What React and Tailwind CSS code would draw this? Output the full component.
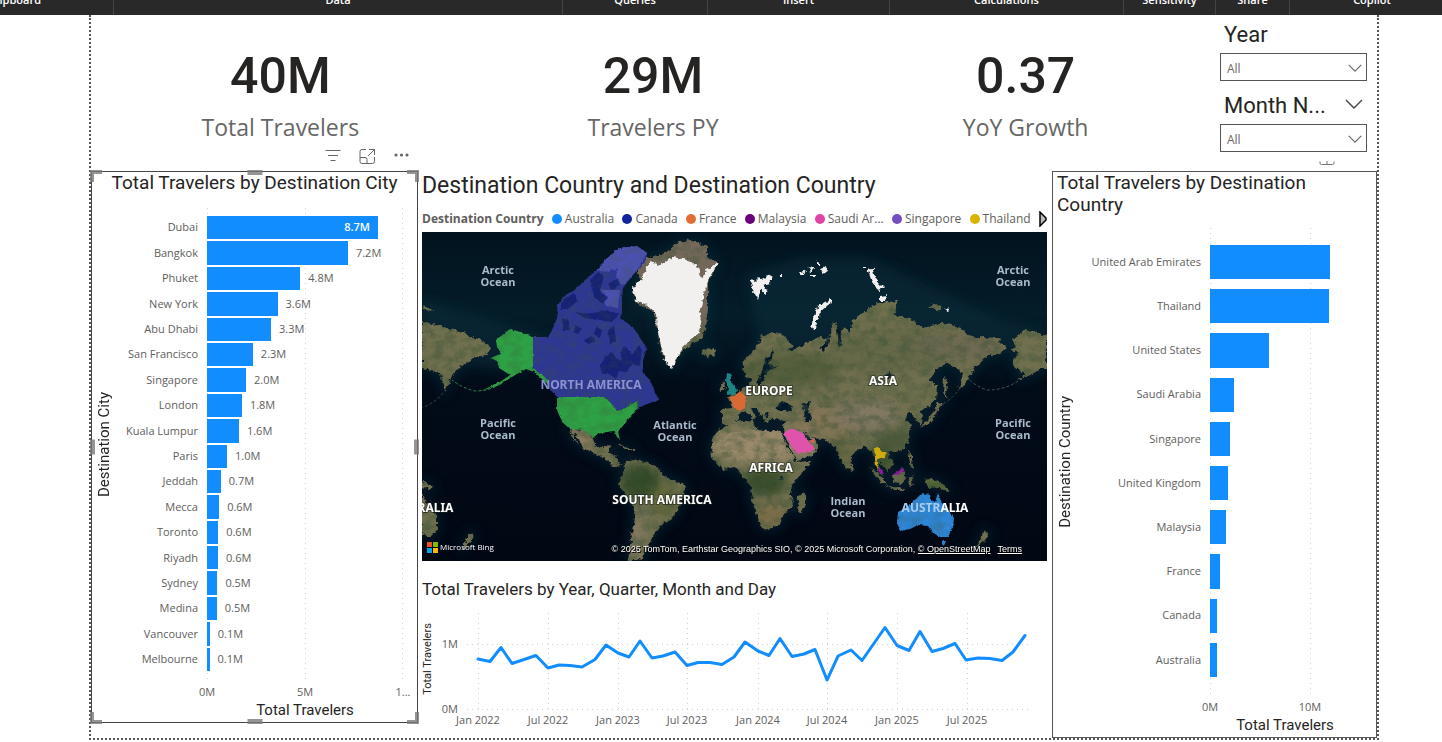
import React from "react";

const ribbonGroups = ["Data", "Queries", "Insert", "Calculations", "Sensitivity", "Share"];

const kpis = [
  { value: "40M", label: "Total Travelers" },
  { value: "29M", label: "Travelers PY" },
  { value: "0.37", label: "YoY Growth" },
];

const cities = [
  ["Dubai", 8.7, 8.72],
  ["Bangkok", 7.2, 7.19],
  ["Phuket", 4.8, 4.76],
  ["New York", 3.6, 3.6],
  ["Abu Dhabi", 3.3, 3.27],
  ["San Francisco", 2.3, 2.34],
  ["Singapore", 2.0, 1.99],
  ["London", 1.8, 1.78],
  ["Kuala Lumpur", 1.6, 1.63],
  ["Paris", 1.0, 1.02],
  ["Jeddah", 0.7, 0.7],
  ["Mecca", 0.6, 0.62],
  ["Toronto", 0.6, 0.57],
  ["Riyadh", 0.6, 0.56],
  ["Sydney", 0.5, 0.53],
  ["Medina", 0.5, 0.5],
  ["Vancouver", 0.1, 0.14],
  ["Melbourne", 0.1, 0.13],
];

const countries = [
  ["United Arab Emirates", 11.96],
  ["Thailand", 11.94],
  ["United States", 5.9],
  ["Saudi Arabia", 2.35],
  ["Singapore", 2.0],
  ["United Kingdom", 1.77],
  ["Malaysia", 1.62],
  ["France", 1.02],
  ["Canada", 0.72],
  ["Australia", 0.65],
];

const legend = [
  ["Australia", "bg-[#118dff]"],
  ["Canada", "bg-[#12239e]"],
  ["France", "bg-[#e66c37]"],
  ["Malaysia", "bg-[#6b007b]"],
  ["Saudi Ar...", "bg-[#e044a7]"],
  ["Singapore", "bg-[#744ec2]"],
  ["Thailand", "bg-[#d9b300]"],
];

const linePoints =
  "478,659 490,661.5 501,647.5 512,663.5 524,659.5 536,655.5 548,668 559,665 570,665.5 582,667 595,659.5 606,645 618,653 629,657 640,641 652,658 663,656 675,652 687,665.5 698,662.5 710,662.5 722,664.5 734,657 745,642 758,651 769,655.5 780,638.5 792,656.5 804,654 815,649.5 827,680 838,656 851,650 862,660.5 885,627.5 897,645.5 909,650.5 920,631.5 932,651.5 943,648.5 955,643.5 966,660 978,658 990,658.5 1002,660.5 1013,652 1025,635.5";

const timeTicks = [
  [478, "Jan 2022"],
  [548, "Jul 2022"],
  [618, "Jan 2023"],
  [687, "Jul 2023"],
  [758, "Jan 2024"],
  [827, "Jul 2024"],
  [897, "Jan 2025"],
  [967, "Jul 2025"],
];

const DOTTED =
  "bg-[repeating-linear-gradient(to_bottom,#d0d0d0_0px,#d0d0d0_1px,transparent_1px,transparent_5px)]";

function Ribbon() {
  return (
    <header className="relative z-10 grid h-[15px] grid-cols-[114fr_449fr_145fr_182fr_234fr_92fr_74fr_152fr] grid-rows-[15px] overflow-hidden bg-[#292929] font-['Open_Sans',sans-serif] text-[11px] leading-4 font-semibold text-white">
      <div className="flex items-end border-r border-[#444] pb-[7px]">
        <span className="flex w-[41px] justify-end">Clipboard</span>
      </div>
      {ribbonGroups.map((g) => (
        <div key={g} className="flex items-end justify-center border-r border-[#444] pb-[7px]">
          {g}
        </div>
      ))}
      <div className="flex items-end justify-center pb-[7px] pl-3">Copilot</div>
    </header>
  );
}

function Chevron({ className }) {
  return (
    <svg viewBox="0 0 18 10" className={className} fill="none" stroke="currentColor" aria-hidden="true">
      <path d="M1 1 L9 9 L17 1" strokeWidth="1.4" />
    </svg>
  );
}

function Slicer({ id, label, expandable }) {
  return (
    <div>
      <div className="flex h-9 items-center justify-between px-1">
        <label htmlFor={id} className="font-[Roboto,sans-serif] text-[22px] leading-7 text-[#252423]">
          {label}
        </label>
        {expandable && (
          <button type="button" aria-label="Expand" className="pb-1 text-[#444]">
            <Chevron className="h-[10px] w-[18px]" />
          </button>
        )}
      </div>
      <div className="relative">
        <select
          id={id}
          className="block h-7 w-full appearance-none rounded-none border border-[#555] bg-white px-[6px] pt-1 font-['Open_Sans',sans-serif] text-xs text-[#666]"
        >
          <option>All</option>
        </select>
        <Chevron className="pointer-events-none absolute top-[11px] right-[5px] h-2 w-[14px] text-[#666]" />
      </div>
    </div>
  );
}

function SelectionHandles() {
  const bar = "absolute bg-[#7a7a7a]/80";
  return (
    <div className="pointer-events-none absolute -inset-0.5" aria-hidden="true">
      <i className="absolute top-0 left-0 h-3 w-3 border-t-4 border-l-4 border-[#7a7a7a]/80" />
      <i className="absolute top-0 right-0 h-3 w-3 border-t-4 border-r-4 border-[#7a7a7a]/80" />
      <i className="absolute bottom-0 left-0 h-3 w-3 border-b-4 border-l-4 border-[#7a7a7a]/80" />
      <i className="absolute right-0 bottom-0 h-3 w-3 border-r-4 border-b-4 border-[#7a7a7a]/80" />
      <i className={`${bar} top-0 left-1/2 h-[5px] w-[15px] -translate-x-1/2`} />
      <i className={`${bar} bottom-0 left-1/2 h-[5px] w-[15px] -translate-x-1/2`} />
      <i className={`${bar} top-1/2 left-0 h-[15px] w-[5px] -translate-y-1/2`} />
      <i className={`${bar} top-1/2 right-0 h-[15px] w-[5px] -translate-y-1/2`} />
    </div>
  );
}

function VisualToolbar() {
  return (
    <div className="absolute -top-6 right-2 flex items-center gap-[18px] text-[#666]">
      <button type="button" aria-label="Filters">
        <svg viewBox="0 0 16 16" className="h-4 w-4" fill="none" stroke="currentColor">
          <path d="M0.5 2.5h15M3 7.5h10M5.5 12.5h5" />
        </svg>
      </button>
      <button type="button" aria-label="Focus mode">
        <svg viewBox="0 0 16 16" className="h-4 w-4" fill="none" stroke="currentColor">
          <path d="M7 1.500H3a2 2 0 0 0-2 2v10a2 2 0 0 0 2 2h10.500a2 2 0 0 0 2-2V9M1 9.500h5a2 2 0 0 1 2 2v4M9 8l6.500-6.500M10 1.500h5.500v5.500" />
        </svg>
      </button>
      <button type="button" aria-label="More options">
        <svg viewBox="0 0 16 16" className="h-4 w-4" fill="currentColor">
          <circle cx="3" cy="7" r="1.600" />
          <circle cx="8.500" cy="7" r="1.600" />
          <circle cx="14" cy="7" r="1.600" />
        </svg>
      </button>
    </div>
  );
}

function CityChart() {
  return (
    <section className="relative h-[552px] border border-[#444] bg-white">
      <VisualToolbar />
      <SelectionHandles />
      <h2 className="text-center font-[Roboto,sans-serif] text-[19px] leading-[22px] text-[#252423]">
        Total Travelers by Destination City
      </h2>
      <div className="mt-[14px] flex pr-[14px]">
        <div className="flex h-[474px] w-6 items-center justify-center">
          <span className="rotate-180 font-[Roboto,sans-serif] text-[15px] leading-4 whitespace-nowrap text-[#252423] [writing-mode:vertical-rl]">
            Destination City
          </span>
        </div>
        <div className="min-w-0 flex-1 font-['Open_Sans',sans-serif] text-[11px] text-[#605e5c]">
          <div className="relative flex h-[474px] flex-col pt-[7px] pb-[10px]">
            <div className="absolute inset-y-0 right-0 left-[91px]" aria-hidden="true">
              <i className={`absolute inset-y-0 left-0 w-px ${DOTTED}`} />
              <i className={`absolute inset-y-0 left-1/2 w-px ${DOTTED}`} />
              <i className={`absolute inset-y-0 right-0 w-px ${DOTTED}`} />
            </div>
            {cities.map(([name, value, size], i) => (
              <div key={name} className="relative flex flex-1 items-stretch">
                <span className="flex w-[91px] items-center justify-end pr-[9px] whitespace-nowrap">
                  {name}
                </span>
                <div className="flex flex-1 items-center py-px">
                  <div
                    className="flex h-full shrink-0 items-center justify-end bg-[#118dff]"
                    style={{ width: `${size * 10}%` }}
                  >
                    {i === 0 && <span className="pr-2 font-semibold text-white">{value.toFixed(1)}M</span>}
                  </div>
                  {i > 0 && <span className="pl-2">{value.toFixed(1)}M</span>}
                </div>
              </div>
            ))}
          </div>
          <div className="ml-[75px] -mr-4 flex justify-between pt-[2px] leading-4">
            <span className="w-8 text-center">0M</span>
            <span className="w-8 text-center">5M</span>
            <span className="w-8 text-center">1...</span>
          </div>
          <div className="ml-[91px] text-center font-[Roboto,sans-serif] text-[15px] leading-5 text-[#252423]">
            Total Travelers
          </div>
        </div>
      </div>
    </section>
  );
}

function CountryChart() {
  return (
    <section className="relative h-[567px] border border-[#555] bg-white">
      <svg viewBox="0 0 16 5" className="absolute -top-[11px] right-[41px] h-[5px] w-4" fill="none" stroke="#777" aria-hidden="true">
        <path d="M1 0.500 V2 a1.500 1.500 0 0 0 1.500 1.500 H13.500 A1.500 1.500 0 0 0 15 2 V0.500 M8 0V3" />
      </svg>
      <h2 className="pl-1 font-[Roboto,sans-serif] text-[19px] leading-[22px] text-[#252423]">
        Total Travelers by Destination
        <br />
        Country
      </h2>
      <div className="mt-3 flex pr-[46px]">
        <div className="flex h-[467px] w-6 items-center justify-center">
          <span className="rotate-180 font-[Roboto,sans-serif] text-[15px] leading-4 whitespace-nowrap text-[#252423] [writing-mode:vertical-rl]">
            Destination Country
          </span>
        </div>
        <div className="min-w-0 flex-1 font-['Open_Sans',sans-serif] text-[11px] text-[#605e5c]">
          <div className="relative flex h-[467px] flex-col pt-[12px] pb-[13px]">
            <div className="absolute inset-y-0 right-0 left-[133px]" aria-hidden="true">
              <i className={`absolute inset-y-0 left-0 w-px ${DOTTED}`} />
              <i className={`absolute inset-y-0 left-[83.3%] w-px ${DOTTED}`} />
            </div>
            {countries.map(([name, size]) => (
              <div key={name} className="relative flex flex-1 items-stretch">
                <span className="flex w-[133px] items-center justify-end pr-[9px] whitespace-nowrap">
                  {name}
                </span>
                <div className="flex-1 py-[5px]">
                  <div className="h-full bg-[#118dff]" style={{ width: `${(size / 12) * 100}%` }} />
                </div>
              </div>
            ))}
          </div>
          <div className="ml-[117px] flex gap-[68px] pt-1 leading-4">
            <span className="w-8 text-center">0M</span>
            <span className="w-8 text-center">10M</span>
          </div>
          <div className="-mr-[30px] ml-[133px] text-center font-[Roboto,sans-serif] text-[15px] leading-5 text-[#252423]">
            Total Travelers
          </div>
        </div>
      </div>
    </section>
  );
}

const LAND = [
  "M422,321 L440,326 L463,333 L483,341 L491,348 L486,355 L473,358 L463,365 L456,372 L450,380 L445,392 L443,384 L440,374 L432,370 L422,368Z",
  "M570,429 L585,430 L593,438 L595,445 L602,449 L607,445 L611,446 L608,452 L617,457 L617,462 L623,465 L613,466 L605,458 L593,453 L583,448 L580,440 L572,432Z",
  "M568,429 L571,431 L575,439 L579,445 L573,439Z",
  "M624,463 L633,459 L647,463 L658,468 L665,477 L680,483 L686,487 L682,497 L678,510 L670,520 L663,523 L653,537 L648,547 L642,557 L638,561 L628,561 L630,547 L633,527 L635,508 L628,498 L619,485 L622,475 L625,468Z",
  "M616,444 L628,447 L636,450 L630,450 L620,446Z",
  "M637,265 L650,257 L667,253 L677,243 L690,240 L707,247 L707,258 L718,262 L708,282 L708,305 L706,325 L702,338 L687,347 L677,358 L672,369 L663,358 L658,335 L655,312 L637,303 L632,290 L640,280Z",
  "M701,352 L706,348 L714,349 L715,355 L707,358Z",
  "M743,368 L744,360 L753,352 L763,335 L780,332 L793,345 L787,352 L797,348 L807,343 L820,337 L830,338 L833,322 L838,323 L838,335 L845,328 L850,333 L853,320 L863,312 L877,303 L897,301 L895,315 L910,318 L923,328 L943,323 L960,328 L973,337 L997,338 L1007,348 L997,355 L987,355 L977,365 L970,375 L963,387 L959,388 L963,374 L955,366 L944,363 L936,370 L930,380 L937,386 L936,400 L926,408 L920,412 L923,420 L921,426 L915,418 L908,412 L906,420 L911,424 L909,440 L903,450 L893,453 L887,450 L890,458 L893,465 L887,471 L882,464 L878,462 L881,470 L884,477 L879,472 L875,460 L872,452 L865,446 L857,450 L851,456 L850,468 L847,470 L841,460 L836,447 L825,440 L812,437 L819,446 L812,455 L797,461 L790,448 L784,435 L783,425 L785,420 L772,419 L768,424 L760,414 L755,408 L751,408 L756,418 L753,420 L746,410 L739,414 L736,425 L731,427 L722,423 L722,409 L733,408 L728,398 L741,391 L750,385 L752,378 L746,376Z",
  "M722,428 L735,422 L752,420 L755,428 L768,431 L780,430 L788,448 L796,462 L811,461 L800,475 L792,485 L790,495 L793,505 L783,515 L780,524 L768,530 L762,528 L757,515 L752,500 L751,485 L742,475 L735,467 L723,469 L712,458 L711,443 L716,433Z",
  "M720,383 L725,382 L726,388 L721,391Z",
  "M798,497 L806,493 L806,503 L801,514 L797,508Z",
  "M870,467 L875,470 L884,480 L887,486 L880,482Z",
  "M885,486 L895,487 L906,490 L895,490Z",
  "M892,475 L904,470 L905,477 L901,484 L894,483Z",
  "M908,478 L914,476 L911,480 L913,486 L909,485Z",
  "M908,450 L911,455 L913,464 L915,470 L911,468Z",
  "M923,480 L933,479 L944,485 L950,491 L940,489 L930,487Z",
  "M938,402 L943,405 L937,408 L936,416 L929,424 L920,428 L928,420 L934,411Z",
  "M944,376 L947,382 L946,398 L943,392Z",
  "M983,530 L990,534 L985,540 L977,547 L973,550 L981,541Z",
  "M470,532 L475,536 L468,543 L460,551 L466,541Z",
  "M422,493 L427,502 L437,517 L437,530 L430,537 L422,535Z",
  "M422,481 L434,487 L422,489Z",
  "M1047,336 L1035,332 L1025,329 L1012,340 L1016,346 L1011,350 L1018,354 L1012,361 L1016,368 L1026,374 L1017,381 L1032,374 L1041,368 L1047,368Z",
  "M930,306 L937,304 L943,308 L938,311Z",
  "M422,305 L430,309 L435,311 L424,310Z",
  "M850,465 L853,467 L852,471 L850,470Z",
];

const ICE = [
  "M632,290 L640,280 L645,272 L650,262 L660,265 L673,257 L687,260 L697,265 L702,278 L707,270 L718,262 L707,282 L703,298 L700,315 L702,325 L697,335 L687,343 L677,357 L672,369 L665,360 L661,345 L658,332 L657,315 L648,305 L637,302Z",
  "M750,280 L756,281 L760,277 L762,280 L768,274 L773,277 L770,283 L763,285 L768,292 L765,294 L761,289 L758,300 L753,290Z",
  "M867,268 L873,270 L875,278 L879,283 L884,288 L878,290 L872,282Z",
  "M880,296 L887,295 L885,301 L880,301Z",
  "M831,299 L832,302 L822,310 L816,322 L815,330 L811,329 L813,318 L819,306Z",
  "M799,272 l5,-1 l2,3 l-5,1Z M808,268 l5,-2 l2,3 l-5,3Z M817,262 l3,-1 l0,4 l-3,0Z M820,269 l6,-2 l2,3 l-6,3Z M812,274 l4,0 l0,2 l-4,0Z M780,275 l2,0 l0,2 l-2,0Z M848,270 l2,0 l0,1 l-2,0Z M863,266 l3,0 l0,2 l-3,0Z M944,308 l6,1 l-1,3Z",
];

const WATER = [
  "M756,384 L760,374 L766,358 L773,349 L774,353 L768,364 L778,366 L768,371 L764,380 L758,386Z",
  "M775,408 L781,401 L786,403 L793,407 L791,411 L780,411Z",
  "M802,403 L810,401 L808,410 L812,421 L805,421 L804,410Z",
  "M804,431 L812,440 L809,441 L805,437Z",
  "M765,412 L768,411 L769,418 L766,418Z",
  "M838,325 L842,337 L841,348 L838,346 L836,330Z",
  "M828,338 L830,342 L824,352 L821,350Z",
  "M780,476 L784,476 L783,480 L780,479Z",
  "M888,371 L892,375 L889,378 L884,381Z",
];

const CANADA =
  "M533,337 L548,337 L553,328 L557,318 L558,305 L563,297 L577,288 L587,278 L597,270 L607,258 L620,248 L637,246 L647,253 L645,262 L633,275 L623,288 L622,298 L622,312 L620,318 L633,327 L640,338 L647,348 L643,360 L643,373 L650,380 L655,392 L659,400 L650,403 L638,408 L637,401 L627,407 L617,411 L613,405 L605,397 L557,397 L548,387 L547,380 L533,368Z";

const CANADA_WATER =
  "M600,366 L605,357 L612,352 L615,358 L622,361 L620,350 L626,347 L632,355 L639,345 L642,350 L640,366 L632,364 L626,372 L619,371 L616,380 L610,374 L602,374Z M575,312 L590,314 L604,310 L620,314 L612,322 L600,320 L584,318Z M590,280 L598,272 L604,276 L600,290 L608,298 L602,304 L594,296Z M562,300 L574,293 L578,300 L570,308 L560,310Z M608,330 L614,326 L616,340 L610,344Z M575,325 L582,328 L578,334 L573,332Z M562,318 L568,320 L570,330 L563,330Z M584,340 L592,336 L596,341 L588,344Z M608,284 L618,278 L620,284 L612,290Z M596,326 L602,330 L600,338 L594,334Z";

const US =
  "M557,397 L605,397 L613,405 L617,411 L627,407 L637,401 L638,408 L634,412 L627,421 L622,427 L618,431 L620,440 L617,437 L614,431 L607,432 L597,434 L593,438 L585,430 L570,429 L562,422 L557,410Z M496,340 L510,329 L520,332 L533,337 L533,368 L546,378 L550,386 L543,380 L534,372 L526,369 L517,374 L497,386 L481,391 L500,382 L510,375 L499,368 L497,361 L490,358 L501,354 L497,347Z";

const AUSTRALIA =
  "M898,512 L907,507 L915,500 L922,493 L930,495 L931,500 L935,502 L938,493 L942,503 L950,512 L954,518 L953,527 L948,537 L940,537 L932,532 L928,526 L918,525 L910,529 L900,531 L897,523Z M942,541 L946,541 L944,546 L942,544Z";

const tone = [
  [760, 445, 48, 18, "#9c8a6c", 1],
  [765, 482, 22, 14, "#354c26", 0.95],
  [770, 515, 18, 12, "#7d6d48", 0.9],
  [800, 445, 18, 14, "#96836a", 0.9],
  [825, 422, 32, 16, "#857558", 0.9],
  [866, 415, 34, 14, "#837862", 0.95],
  [840, 452, 12, 16, "#64643f", 0.8],
  [895, 440, 20, 12, "#4a5736", 0.9],
  [880, 460, 16, 12, "#354c28", 0.9],
  [790, 370, 50, 16, "#525a38", 0.8],
  [890, 350, 60, 22, "#626747", 0.7],
  [960, 345, 45, 14, "#6e6a52", 0.7],
  [640, 482, 20, 18, "#304725", 0.95],
  [666, 500, 16, 16, "#606735", 0.7],
  [636, 535, 8, 30, "#857962", 0.9],
  [583, 438, 12, 10, "#8f7c60", 0.9],
  [936, 485, 14, 6, "#44612c", 1],
  [675, 280, 50, 60, "#76695c", 1],
];

const mapLabels = [
  [498, 274, ["Arctic", "Ocean"]],
  [1013, 274, ["Arctic", "Ocean"]],
  [498, 427, ["Pacific", "Ocean"]],
  [1013, 427, ["Pacific", "Ocean"]],
  [675, 429, ["Atlantic", "Ocean"]],
  [848, 505, ["Indian", "Ocean"]],
];

function WorldMap() {
  return (
    <svg viewBox="422 232 625 329" preserveAspectRatio="xMidYMid slice" className="block h-full w-full" role="img" aria-label="World map">
      <defs>
        <linearGradient id="sea" x1="0" y1="0" x2="0" y2="1">
          <stop offset="0" stopColor="#02131f" />
          <stop offset="0.250" stopColor="#041d29" />
          <stop offset="0.480" stopColor="#020b18" />
          <stop offset="1" stopColor="#010814" />
        </linearGradient>
        <filter id="coast" x="-5%" y="-5%" width="110%" height="110%">
          <feTurbulence type="fractalNoise" baseFrequency="0.22" numOctaves="3" seed="4" result="n" />
          <feDisplacementMap in="SourceGraphic" in2="n" scale="6" xChannelSelector="R" yChannelSelector="G" />
        </filter>
        <filter id="edge" x="-5%" y="-5%" width="110%" height="110%">
          <feTurbulence type="fractalNoise" baseFrequency="0.3" numOctaves="2" seed="9" result="n" />
          <feDisplacementMap in="SourceGraphic" in2="n" scale="3" xChannelSelector="R" yChannelSelector="G" />
        </filter>
        <filter id="relief" x="0" y="0" width="100%" height="100%">
          <feTurbulence type="fractalNoise" baseFrequency="0.09 0.13" numOctaves="5" seed="12" result="n" />
          <feColorMatrix in="n" type="matrix" values="0 0 0 0 0.05  0 0 0 0 0.09  0 0 0 0 0.04  2.6 0 0 0 -1" result="dark" />
          <feComposite in="dark" in2="SourceAlpha" operator="in" />
        </filter>
        <filter id="soft" x="-50%" y="-50%" width="200%" height="200%">
          <feGaussianBlur stdDeviation="5" />
        </filter>
        <filter id="shelf" x="-20%" y="-20%" width="140%" height="140%">
          <feGaussianBlur stdDeviation="6" />
        </filter>
        <clipPath id="landclip">
          {LAND.map((d) => (
            <path key={d} d={d} />
          ))}
        </clipPath>
      </defs>
      <rect x="422" y="232" width="625" height="329" fill="url(#sea)" />
      <g filter="url(#shelf)" opacity="0.5">
        {LAND.map((d) => (
          <path key={d} d={d} fill="#0b3340" stroke="#0b3340" strokeWidth="5" />
        ))}
        <path d="M745,275 L800,258 L870,258 L1000,320 L1047,330 L1047,350 L760,340Z" fill="#0a2f3c" />
        <path d="M422,300 L560,340 L520,372 L422,360Z" fill="#0a2f3c" />
      </g>
      <g filter="url(#coast)">
        <g clipPath="url(#landclip)">
          <rect x="422" y="232" width="625" height="329" fill="#706f50" />
          <g filter="url(#soft)">
            {tone.map(([cx, cy, rx, ry, fill, opacity]) => (
              <ellipse key={`${cx}-${cy}`} cx={cx} cy={cy} rx={rx} ry={ry} fill={fill} opacity={opacity} />
            ))}
          </g>
        </g>
        {WATER.map((d) => (
          <path key={d} d={d} fill="#04192a" />
        ))}
      </g>
      <g filter="url(#coast)" opacity="0.52">
        <g filter="url(#relief)">
          {LAND.map((d) => (
            <path key={d} d={d} />
          ))}
        </g>
      </g>
      <g filter="url(#coast)" fill="#f2f0ef">
        {ICE.map((d) => (
          <path key={d} d={d} />
        ))}
      </g>
      <path d="M443,393 Q436,402 422,408 M960,388 Q950,402 938,406" stroke="#4c5544" strokeWidth="0.8" fill="none" strokeDasharray="3 2" />
      <path d="M1018,381 Q1005,390 987,390 Q975,386 968,378" stroke="#58645a" strokeWidth="0.8" fill="none" strokeDasharray="3 2" />
      <path d="M500,384 Q490,391 475,391 Q462,388 452,380" stroke="#38a050" strokeWidth="0.8" fill="none" strokeDasharray="3 2" />
      <g filter="url(#edge)">
        <path d={CANADA} fill="#2f3892" />
        <path d="M597,270 L607,258 L620,248 L637,246 L647,253 L640,266 L625,284 L614,286 L618,268 L606,272Z M600,290 L620,290 L618,308 L606,306Z" fill="#5358b8" opacity="0.800" />
        <path d={CANADA_WATER} fill="#10206f" opacity="0.85" />
        <path d={US} fill="#2fa045" />
        <path d={AUSTRALIA} fill="#2f86d6" />
        <path d="M727,373 L732,374 L730,380 L737,390 L735,394 L727,395 L729,389 L726,381Z" fill="#1f8585" />
        <path d="M728,397 L735,396 L740,391 L746,396 L745,408 L740,411 L733,408 L732,402Z" fill="#d96a35" />
        <path d="M784,433 L791,428 L803,433 L808,441 L814,447 L813,450 L798,454 L791,445Z" fill="#e052ad" />
        <path d="M809,441 L815,439 L814,443Z" fill="#e0654f" />
        <path d="M874,448 L878,447 L882,452 L886,452 L885,457 L880,458 L877,460 L877,465 L880,469 L876,466 L875,458Z" fill="#cfab10" />
        <path d="M878,467 L882,470 L884,475 L880,474Z M892,475 L900,470 L903,467 L904,471 L898,475Z" fill="#8a1f95" />
      </g>
      <g opacity="0.22" filter="url(#relief)">
        <path d={CANADA} />
        <path d={US} />
        <path d={AUSTRALIA} />
      </g>
      <g textAnchor="middle" fontSize="12" fontWeight="700" fontFamily="'Noto Sans', sans-serif">
        <text x="591" y="389" fill="#8d91cf">NORTH AMERICA</text>
        <text x="935" y="512">
          <tspan fill="#a5cdf2">AUSTR</tspan>
          <tspan fill="#fff">ALIA</tspan>
        </text>
        <g fill="#fff" stroke="#1a1f1a" strokeOpacity="0.5" strokeWidth="2" paintOrder="stroke">
          <text x="662" y="504">SOUTH AMERICA</text>
          <text x="769" y="395">EUROPE</text>
          <text x="883" y="385">ASIA</text>
          <text x="771" y="472">AFRICA</text>
          <text x="420" y="512">AUSTRALIA</text>
        </g>
        {mapLabels.map(([x, y, [first, second]]) => (
          <g key={`${x}-${y}`} fill="#a9bccb" fontSize="11" fontFamily="'Open Sans', sans-serif">
            <text x={x} y={y}>{first}</text>
            <text x={x} y={y + 12}>{second}</text>
          </g>
        ))}
      </g>
    </svg>
  );
}

function MapVisual() {
  return (
    <section>
      <h2 className="pt-px font-[Roboto,sans-serif] text-[23px] leading-7 whitespace-nowrap text-[#252423]">
        Destination Country and Destination Country
      </h2>
      <div className="flex h-8 items-center justify-between pt-[6px] font-['Open_Sans',sans-serif] text-[12px] whitespace-nowrap text-[#605e5c]">
        <span className="font-bold">Destination Country</span>
        {legend.map(([name, color]) => (
          <span key={name} className="flex items-center gap-[3px]">
            <i className={`h-[10px] w-[10px] rounded-full ${color}`} />
            {name}
          </span>
        ))}
        <button type="button" aria-label="Next legend items">
          <svg viewBox="0 0 8 16" className="h-4 w-2" fill="#bbb" stroke="#000" strokeWidth="1.500">
            <path d="M1 1 L7 7 V9 L1 15Z" />
          </svg>
        </button>
      </div>
      <div className="relative h-[329px] overflow-hidden">
        <WorldMap />
        <div className="absolute bottom-2 left-[5px] flex items-center gap-[2px] font-['Open_Sans',sans-serif] text-[8px] leading-3 text-white">
          <svg viewBox="0 0 11 11" className="h-[11px] w-[11px]" aria-hidden="true">
            <path fill="#f25022" d="M0 0h5v5H0z" />
            <path fill="#7fba00" d="M6 0h5v5H6z" />
            <path fill="#00a4ef" d="M0 6h5v5H0z" />
            <path fill="#ffb900" d="M6 6h5v5H6z" />
          </svg>
          Microsoft Bing
        </div>
        <div className="absolute right-[25px] bottom-[6px] flex gap-[7px] font-['Liberation_Sans',Arial,sans-serif] text-[9px] leading-3 whitespace-nowrap text-white [text-shadow:1px_1px_0_#000,-1px_0_0_#000]">
          <span>
            © 2025 TomTom, Earthstar Geographics SIO, © 2025 Microsoft Corporation,{" "}
            <a href="#osm" className="underline">
              © OpenStreetMap
            </a>
          </span>
          <a href="#terms" className="underline">
            Terms
          </a>
        </div>
      </div>
    </section>
  );
}

function LineVisual() {
  return (
    <section className="pt-4">
      <h2 className="font-[Roboto,sans-serif] text-[17px] leading-6 whitespace-nowrap text-[#252423]">
        Total Travelers by Year, Quarter, Month and Day
      </h2>
      <svg viewBox="422 601 625 129" className="block w-full" role="img" aria-label="Total Travelers by month">
        <g stroke="#cfcfcf" strokeDasharray="1 4">
          <path d="M467 644.500H1032M467 709.500H1032" />
          {timeTicks.map(([x]) => (
            <path key={x} d={`M${x + 0.5} 613V709`} />
          ))}
        </g>
        <polyline points={linePoints} fill="none" stroke="#118dff" strokeWidth="3" strokeLinejoin="round" strokeLinecap="round" />
        <g fill="#605e5c" fontSize="11" fontFamily="'Open Sans', sans-serif">
          <text x="458" y="648" textAnchor="end">1M</text>
          <text x="458" y="713" textAnchor="end">0M</text>
          {timeTicks.map(([x, label]) => (
            <text key={label} x={x} y="724" textAnchor="middle">
              {label}
            </text>
          ))}
        </g>
        <text transform="translate(431 659) rotate(-90)" textAnchor="middle" fontSize="11" fill="#252423" fontFamily="Roboto, sans-serif">
          Total Travelers
        </text>
      </svg>
    </section>
  );
}

export default function App() {
  return (
    <div className="bg-white">
      <Ribbon />
      <main className="mr-[63px] ml-[89px] border-2 border-t-0 border-dotted border-[#555]">
        <div className="flex h-[156px] items-start justify-between gap-2 pr-[10px] pl-[3px]">
          <div className="grid flex-1 grid-cols-3 pt-[33px] text-center">
            {kpis.map((k) => (
              <div key={k.label}>
                <div className="font-[Roboto,sans-serif] text-[50px] leading-[56px] font-medium text-[#252423]">{k.value}</div>
                <div className="font-['Open_Sans',sans-serif] text-[23px] leading-[46px] text-[#666]">{k.label}</div>
              </div>
            ))}
          </div>
          <div className="flex w-[147px] flex-col gap-[7px] pt-[2px]">
            <Slicer id="year" label="Year" />
            <Slicer id="month" label="Month N..." expandable />
          </div>
        </div>
        <div className="grid grid-cols-[327fr_626fr_325fr] gap-x-1">
          <CityChart />
          <div className="min-w-0 pr-px">
            <MapVisual />
            <LineVisual />
          </div>
          <CountryChart />
        </div>
      </main>
    </div>
  );
}
